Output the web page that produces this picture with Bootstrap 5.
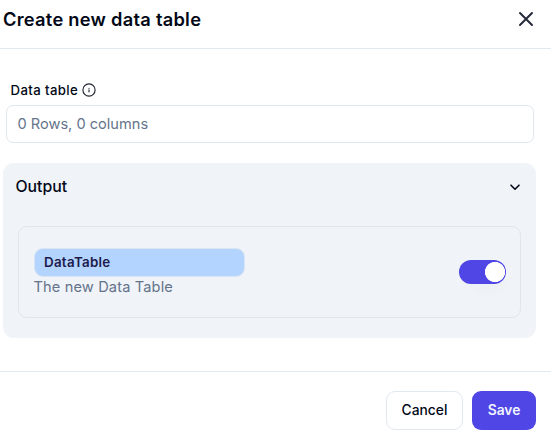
<!DOCTYPE html>
<html lang="en">
<head>
<meta charset="utf-8">
<meta name="viewport" content="width=device-width, initial-scale=1">
<title>Create new data table</title>
<link href="https://cdn.jsdelivr.net/npm/bootstrap@5.3.0/dist/css/bootstrap.min.css" rel="stylesheet">
<style>
  body { font-family: Inter, "Liberation Sans", sans-serif; color: #020817; font-size: 14px; line-height: 20px; height: 442px; overflow: hidden; }
  .dialog-head { height: 49px; padding: 0 17px 10px 3px; border-bottom: 1px solid #e2e8f0; }
  .dialog-title { font-size: 18.3px; font-weight: 600; line-height: 28px; letter-spacing: .26px; }
  .plain-btn { border: 0; background: none; padding: 0; color: inherit; }
  .dialog-main { height: 322px; padding: 31px 15px 0 3px; }
  .field-label { font-size: 13.2px; font-weight: 500; letter-spacing: .38px; padding-left: 7.5px; gap: 4px; height: 20px; }
  .field-input { height: 38px; margin: 5px 2px 20px 3px; padding: 0 10.5px; font-size: 14.6px; color: #64748b; border: 1px solid #e2e8f0; border-radius: 7px; }
  .output-panel { height: 175px; padding: 0 15px; background: #f0f3f8; border-radius: 11px; }
  .output-head { height: 63px; padding: 0 0 16px; margin-left: -2.5px; font-size: 15.8px; font-weight: 500; }
  .output-item { height: 92px; padding: 0 14px 0 14.5px; border: 1px solid #e2e6ec; border-radius: 9px; }
  .name-tag { width: 211px; height: 29px; padding: 0 9.5px; background: #b2d4ff; border: 1px solid #dbe5f2; border-radius: 9px; font-size: 13.4px; font-weight: 600; letter-spacing: .25px; color: #1e1b4b; }
  .item-note { font-size: 14.6px; letter-spacing: .14px; color: #64748b; }
  .form-switch .output-toggle { width: 47px; height: 24px; margin: 0; border: 0; background-color: #4f46e5;
    background-image: radial-gradient(circle at 36px 12px, #fff 9.8px, transparent 10.3px); background-size: 100% 100%; box-shadow: 6px 12px 13px -6px rgba(15, 23, 42, .025); }
  .form-switch .output-toggle:not(:checked) { background-color: #cbd5e1; background-image: radial-gradient(circle at 12px 12px, #fff 9.8px, transparent 10.3px); }
  .dialog-foot { height: 71px; padding: 19px 15px 0; gap: 9px; border-top: 1px solid #e2e8f0; }
  .dialog-foot .btn { height: 39px; padding: 0 0 1px; font-size: 13.8px; font-weight: 500; border-radius: 9px; }
  .dialog-foot .btn-cancel { width: 77px; border: 1px solid #e2e8f0; color: #020817; background: #fff; }
  .dialog-foot .btn-save { width: 64px; border: 0; color: #f1f3ff; background: #4f46e5; font-weight: 600; }
</style>
</head>
<body class="d-flex flex-column bg-white">
<header class="dialog-head d-flex align-items-center justify-content-between">
  <h1 class="dialog-title m-0">Create new data table</h1>
  <button class="plain-btn d-flex" type="button" aria-label="Close">
    <svg width="16" height="16" viewBox="0 0 16 16" fill="none" stroke="#252a3b" stroke-width="2" stroke-linecap="round"><path d="M2 2l12 12M14 2L2 14"/></svg>
  </button>
</header>
<main class="dialog-main">
  <label class="field-label d-flex align-items-center" for="dataTable">Data table
    <svg width="14" height="14" viewBox="0 0 14 14" fill="none" stroke="#20242e" stroke-width="1.15" stroke-linecap="round"><circle cx="7" cy="7" r="6.1"/><path d="M7 6.9v1.9M7 5.2v.1"/></svg>
  </label>
  <div class="field-input d-flex align-items-center" id="dataTable">0 Rows, 0 columns</div>
  <section class="output-panel">
    <div class="output-head d-flex align-items-center justify-content-between">
      <span>Output</span>
      <button class="plain-btn d-flex" type="button" aria-label="Collapse">
        <svg width="12" height="12" viewBox="0 0 12 12" fill="none" stroke="currentColor" stroke-width="1.6" stroke-linecap="round" stroke-linejoin="round"><path d="M2 4.2l4 4 4-4"/></svg>
      </button>
    </div>
    <div class="output-item d-flex align-items-center justify-content-between">
      <div>
        <div class="name-tag d-flex align-items-center">DataTable</div>
        <div class="item-note">The new Data Table</div>
      </div>
      <div class="form-check form-switch p-0 m-0 d-flex">
        <input class="form-check-input output-toggle" type="checkbox" role="switch" aria-label="DataTable" checked>
      </div>
    </div>
  </section>
</main>
<footer class="dialog-foot d-flex justify-content-end">
  <button class="btn btn-cancel" type="button">Cancel</button>
  <button class="btn btn-save" type="button">Save</button>
</footer>
</body>
</html>
